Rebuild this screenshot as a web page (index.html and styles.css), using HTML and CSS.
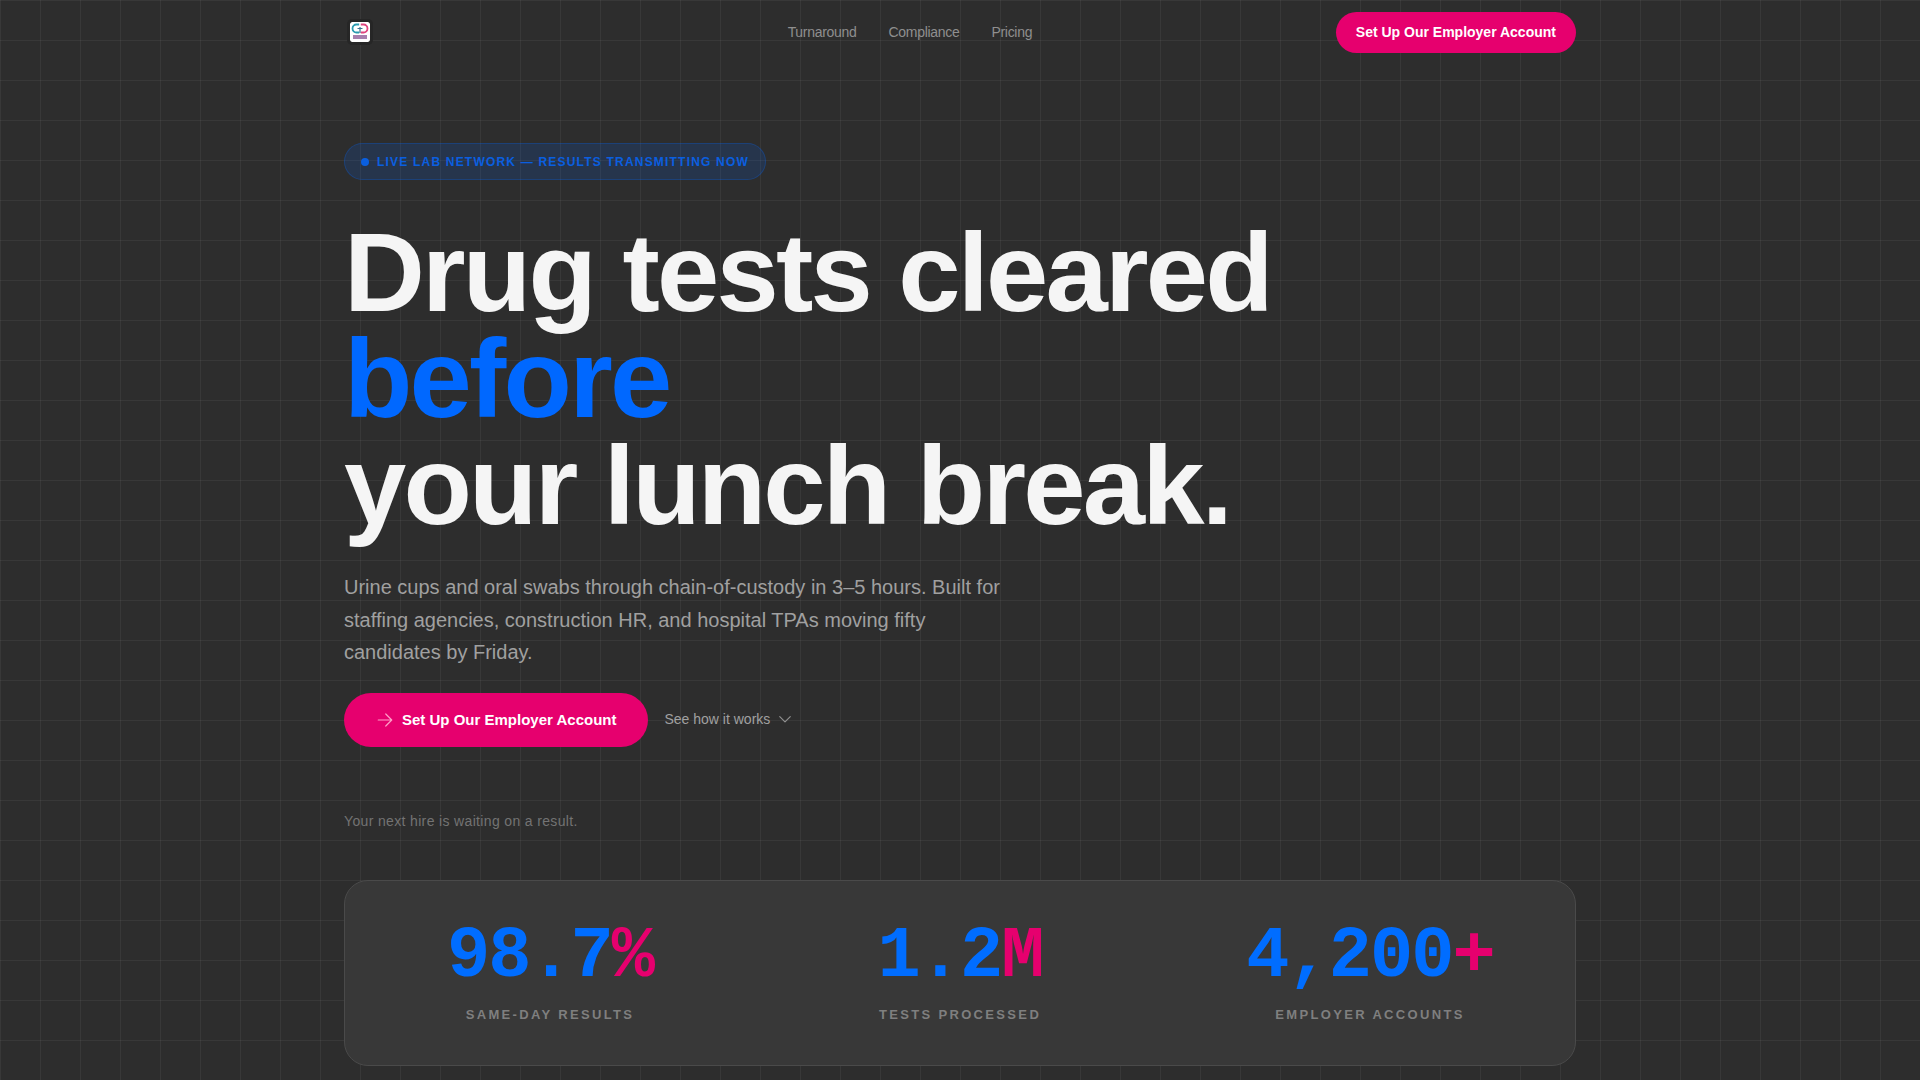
FILE: index.html
```html
<!DOCTYPE html>
<html lang="en">
<head>
    <meta charset="utf-8">
    <link rel="stylesheet" href="styles.css">
    <title>Employer Drug Testing</title>
</head>
<body>
    <div class="page">
        <header class="topbar">
            <a class="logo" href="#">
                <svg width="20" height="20" viewBox="0 0 20 20">
                    <rect width="20" height="20" rx="2" fill="#fff"/>
                    <path d="M9.2 2.5H6.5a4 4 0 0 0 0 8h2.7" fill="none" stroke="#2a9bb0" stroke-width="1.8"/>
                    <path d="M10.8 2.5h2.7a4 4 0 0 1 0 8h-2.7" fill="none" stroke="#e0457f" stroke-width="1.8"/>
                    <path d="M7.5 6.5h5M10 5v6" stroke="#3a6f8f" stroke-width="1.2"/>
                    <rect x="3" y="13" width="14" height="4" fill="#a77fae"/>
                </svg>
            </a>
            <nav class="nav">
                <a href="#">Turnaround</a>
                <a href="#">Compliance</a>
                <a href="#">Pricing</a>
            </nav>
            <a class="btn btn-small" href="#">Set Up Our Employer Account</a>
        </header>

        <section class="hero">
            <div class="pill"><span class="dot"></span>LIVE LAB NETWORK — RESULTS TRANSMITTING NOW</div>
            <h1>Drug tests cleared<br><span class="blue">before</span><br>your lunch break.</h1>
            <p class="lead">Urine cups and oral swabs through chain-of-custody in 3–5 hours. Built for staffing agencies, construction HR, and hospital TPAs moving fifty candidates by Friday.</p>
            <div class="actions">
                <a class="btn btn-big" href="#">
                    <svg width="18" height="18" viewBox="0 0 24 24" fill="none" stroke="#ff9ec8" stroke-width="1.6" stroke-linecap="round" stroke-linejoin="round"><path d="M3 12h18M13 4l8 8-8 8"/></svg>
                    Set Up Our Employer Account
                </a>
                <a class="how" href="#">See how it works
                    <svg width="14" height="14" viewBox="0 0 24 24" fill="none" stroke="#8f8f8f" stroke-width="2" stroke-linecap="round" stroke-linejoin="round"><path d="M3 8l9 9 9-9"/></svg>
                </a>
            </div>
            <p class="note">Your next hire is waiting on a result.</p>
        </section>

        <section class="stats">
            <div class="stat">
                <div class="num">98.7<span class="pink">%</span></div>
                <div class="label">SAME-DAY RESULTS</div>
            </div>
            <div class="stat">
                <div class="num">1.2<span class="pink">M</span></div>
                <div class="label">TESTS PROCESSED</div>
            </div>
            <div class="stat">
                <div class="num">4,200<span class="pink">+</span></div>
                <div class="label">EMPLOYER ACCOUNTS</div>
            </div>
        </section>
    </div>
</body>
</html>
```

FILE: styles.css
```css
* {
    margin: 0;
    padding: 0;
    box-sizing: border-box;
}

html, body {
    height: 1080px;
    overflow: hidden;
}

body {
    font-family: "Liberation Sans", Arial, sans-serif;
    background-color: #2d2d2d;
    background-image:
        linear-gradient(rgba(255, 255, 255, 0.05) 1px, transparent 1px),
        linear-gradient(90deg, rgba(255, 255, 255, 0.05) 1px, transparent 1px);
    background-size: 40px 40px;
    color: #fff;
}

a {
    text-decoration: none;
}

.page {
    width: 1232px;
    margin: 0 auto;
}

.topbar {
    display: flex;
    align-items: center;
    justify-content: space-between;
    height: 64px;
}

.logo {
    display: flex;
    width: 140px;
    padding-left: 6px;
}

.logo svg {
    border-radius: 2px;
    box-shadow: 0 0 0 3px #262626;
}

.nav {
    display: flex;
    gap: 32px;
}

.nav a {
    font-size: 14px;
    letter-spacing: -0.3px;
    color: #8f8f8f;
}

.btn {
    display: flex;
    align-items: center;
    background: #e6006e;
    color: #fff;
    font-weight: 700;
    border-radius: 999px;
}

.btn-small {
    height: 41px;
    padding: 0 20px;
    font-size: 14px;
}

.hero {
    padding-top: 79px;
}

.pill {
    display: inline-flex;
    align-items: center;
    gap: 8px;
    height: 37px;
    padding: 0 16px;
    background: rgba(0, 102, 255, 0.15);
    border: 1px solid rgba(0, 102, 255, 0.25);
    border-radius: 999px;
    font-size: 12px;
    font-weight: 700;
    letter-spacing: 1.2px;
    color: #0a5fe0;
}

.dot {
    width: 8px;
    height: 8px;
    border-radius: 50%;
    background: #0a5fe0;
}

h1 {
    margin-top: 40px;
    font-size: 112px;
    font-weight: 700;
    line-height: 106.4px;
    letter-spacing: -2.8px;
    color: #f5f5f5;
}

.blue {
    color: #0068ff;
}

.lead {
    width: 672px;
    margin-top: 32px;
    font-size: 20px;
    line-height: 32.5px;
    color: #a0a0a0;
}

.actions {
    display: flex;
    align-items: center;
    gap: 16px;
    margin-top: 24px;
}

.btn-big {
    gap: 8px;
    height: 54px;
    padding: 0 32px;
    font-size: 15px;
}

.how {
    display: flex;
    align-items: center;
    gap: 8px;
    padding-bottom: 1px;
    font-size: 14px;
    color: #a0a0a0;
}

.note {
    margin-top: 66px;
    font-size: 14px;
    letter-spacing: 0.35px;
    color: #737373;
}

.stats {
    display: grid;
    grid-template-columns: repeat(3, 1fr);
    height: 186px;
    margin-top: 51px;
    padding: 40px 0;
    background: #383838;
    border: 1px solid #4a4a4a;
    border-radius: 24px;
}

.stat {
    text-align: center;
}

.num {
    font-family: "Liberation Mono", monospace;
    font-size: 72px;
    font-weight: 700;
    line-height: 72px;
    letter-spacing: -2px;
    color: #006dff;
}

.pink {
    color: #e6006e;
}

.label {
    margin-top: 14px;
    font-size: 13px;
    font-weight: 700;
    letter-spacing: 2.34px;
    color: #7f7f7f;
}
```
